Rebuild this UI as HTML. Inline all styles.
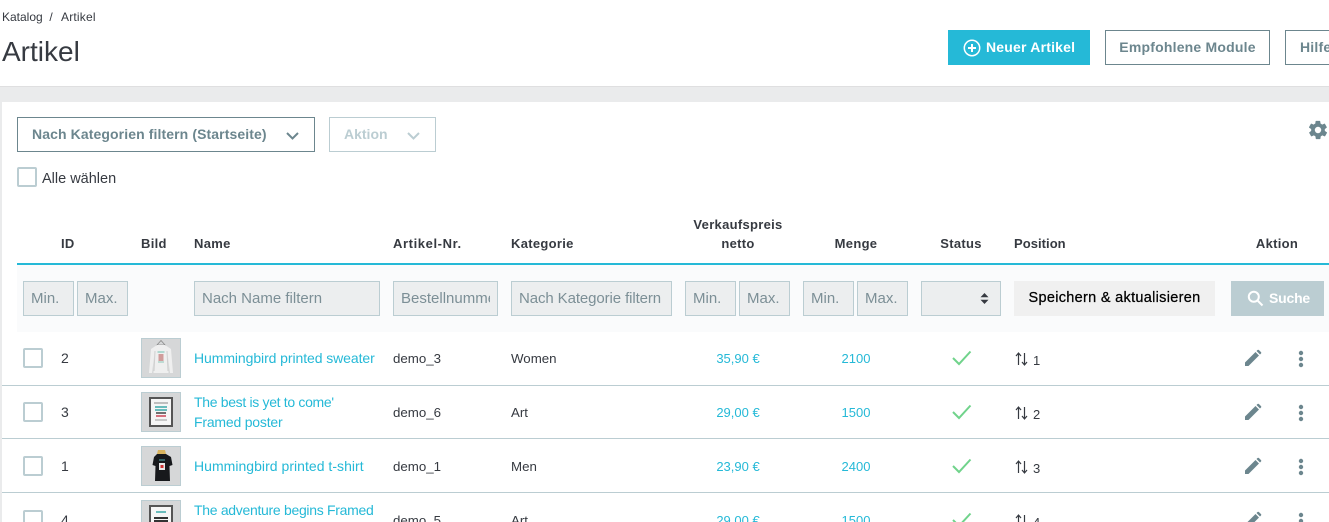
<!DOCTYPE html>
<html lang="de"><head><meta charset="utf-8"><title>Artikel</title>
<style>
*{box-sizing:border-box;margin:0;padding:0}
html,body{width:1329px;height:522px;overflow:hidden;background:#fff;font-family:"Liberation Sans",sans-serif;color:#363a41}
#p{position:relative;width:1329px;height:522px;overflow:hidden;background:#fff}
.a{position:absolute;white-space:nowrap}
.t{font-size:14px;line-height:20px;height:20px}
.d{font-size:13.3px;line-height:22px}
.n{font-size:13px;line-height:21px}
.h{font-size:13px;font-weight:bold;line-height:18px;height:18px;letter-spacing:.3px;color:#363a41}
.c{text-align:center;transform:translateX(-50%)}
.l{color:#25b9d7}
.in{height:35px;top:281px;background:#eceeef;border:1px solid #bbcdd2;font:15px/33px "Liberation Sans",sans-serif;color:#7c8f96;padding:0 7px;overflow:hidden}
.in span{display:block;overflow:hidden}
.cb{width:20px;height:20px;left:23px;border:2px solid #bbcdd2;border-radius:2px;background:#fff}
.sep{left:2px;width:1327px;height:1px;background:#bbcdd2}
.th{left:141px;width:40px;height:40px;background:#d6d7d8;border:1px solid #bbcdd2;overflow:hidden}
.th svg{filter:blur(.35px)}
.btn{top:30px;height:35px;font-size:14px;font-weight:bold;line-height:33px;border:1px solid #6c868e;color:#6c868e;letter-spacing:.2px}
</style></head><body><div id="p">

<div class="a" style="left:2px;top:9px;font-size:12px;line-height:16px">Katalog&nbsp;&nbsp;/</div>
<div class="a" style="left:61px;top:9px;font-size:12px;line-height:16px;letter-spacing:.2px">Artikel</div>
<h1 class="a" style="left:2px;top:36px;font-size:28px;line-height:32px;font-weight:normal">Artikel</h1>

<div class="a btn" style="left:948px;width:142px;background:#25b9d7;border-color:#25b9d7;color:#fff;padding-left:37px">Neuer Artikel</div>
<svg class="a" style="left:963px;top:39px" width="18" height="18" viewBox="0 0 18 18" fill="none" stroke="#fff"><circle cx="9" cy="9" r="7.7" stroke-width="1.5"/><path d="M9 5v8M5 9h8" stroke-width="2"/></svg>
<div class="a btn" style="left:1105px;width:165px;text-align:center">Empfohlene Module</div>
<div class="a btn" style="left:1285px;width:60px;padding-left:14px">Hilfe</div>

<div class="a" style="left:0;top:86px;width:1329px;height:16px;background:#eaebec;border-top:1px solid #dfdfe0"></div>
<div class="a" style="left:0;top:102px;width:2px;height:420px;background:#eaebec"></div>

<div class="a" style="left:17px;top:117px;width:298px;height:35px;border:1px solid #6c868e;font-size:14px;font-weight:bold;line-height:33px;color:#6c868e;padding-left:14px;letter-spacing:.1px">Nach Kategorien filtern (Startseite)</div>
<svg class="a" style="left:285px;top:131px" width="15" height="10" viewBox="0 0 15 10" fill="none" stroke="#6c868e" stroke-width="2"><path d="M2 2l5.500 5.500L13 2"/></svg>
<div class="a" style="left:329px;top:117px;width:107px;height:35px;border:1px solid #bbcdd2;font-size:14px;font-weight:bold;line-height:33px;color:#bbcdd2;padding-left:14px">Aktion</div>
<svg class="a" style="left:406px;top:131px" width="15" height="10" viewBox="0 0 15 10" fill="none" stroke="#bbcdd2" stroke-width="2"><path d="M2 2l5.500 5.500L13 2"/></svg>
<svg class="a" style="left:1307px;top:119px" width="22" height="22" viewBox="0 0 24 24" fill="#6c868e"><path d="M19.4 13a7.600 7.600 0 0 0 0-2l2.100-1.600a.5.500 0 0 0 .1-.6l-2-3.500a.5.500 0 0 0-.6-.2l-2.500 1a7.300 7.300 0 0 0-1.700-1l-.4-2.700a.5.500 0 0 0-.5-.4h-4a.5.500 0 0 0-.5.400l-.4 2.700a7.300 7.300 0 0 0-1.700 1l-2.500-1a.5.500 0 0 0-.6.200l-2 3.500a.5.500 0 0 0 .1.600L4.600 11a7.600 7.600 0 0 0 0 2l-2.100 1.600a.5.500 0 0 0-.1.600l2 3.500c.1.200.4.300.6.200l2.500-1c.5.400 1.100.8 1.700 1l.4 2.700c0 .2.200.4.500.4h4c.3 0 .5-.2.500-.4l.4-2.700c.6-.2 1.200-.6 1.700-1l2.500 1c.2.100.5 0 .6-.2l2-3.500a.5.500 0 0 0-.1-.6zM12 15.500a3.500 3.500 0 1 1 0-7 3.500 3.500 0 0 1 0 7z"/></svg>

<div class="a cb" style="left:17px;top:167px"></div>
<div class="a t" style="left:42px;top:169px;font-size:14.5px">Alle wählen</div>

<div class="a h" style="left:61px;top:235px">ID</div>
<div class="a h" style="left:141px;top:235px">Bild</div>
<div class="a h" style="left:194px;top:235px">Name</div>
<div class="a h" style="left:393px;top:235px;letter-spacing:.6px">Artikel-Nr.</div>
<div class="a h" style="left:511px;top:235px">Kategorie</div>
<div class="a h c" style="left:738px;top:216px">Verkaufspreis</div>
<div class="a h c" style="left:738px;top:235px">netto</div>
<div class="a h c" style="left:856px;top:235px">Menge</div>
<div class="a h c" style="left:961px;top:235px">Status</div>
<div class="a h" style="left:1014px;top:235px;letter-spacing:.05px">Position</div>
<div class="a h c" style="left:1277px;top:235px">Aktion</div>

<div class="a" style="left:17px;top:263px;width:1312px;height:2px;background:#25b9d7"></div>
<div class="a" style="left:17px;top:265px;width:1312px;height:67px;background:#fafbfc"></div>

<div class="a in" style="left:23px;width:51px">Min.</div>
<div class="a in" style="left:77px;width:51px">Max.</div>
<div class="a in" style="left:194px;width:186px">Nach Name filtern</div>
<div class="a in" style="left:393px;width:105px"><span>Bestellnummer</span></div>
<div class="a in" style="left:511px;width:161px;letter-spacing:-.1px">Nach Kategorie filtern</div>
<div class="a in" style="left:685px;width:51px">Min.</div>
<div class="a in" style="left:739px;width:51px">Max.</div>
<div class="a in" style="left:803px;width:51px">Min.</div>
<div class="a in" style="left:857px;width:51px">Max.</div>
<div class="a in" style="left:921px;width:80px"></div>
<svg class="a" style="left:979px;top:292px" width="11" height="13" viewBox="0 0 11 13" fill="#363a41"><path d="M1.500 5.200L5.500 1l4 4.200zM1.500 7.800l4 4.200 4-4.200z"/></svg>
<div class="a" style="left:1014px;top:281px;width:201px;height:35px;background:#f0f0f0;color:#000;font-size:14.500px;line-height:35px;text-align:center;letter-spacing:.3px;-webkit-text-stroke:.25px #000">Speichern &amp; aktualisieren</div>
<div class="a" style="left:1231px;top:281px;width:93px;height:35px;background:#bbcdd2;color:#fff;font-size:14px;font-weight:bold;line-height:35px;padding-left:38px;letter-spacing:-.2px">Suche</div>
<svg class="a" style="left:1247px;top:290px" width="17" height="17" viewBox="0 0 17 17" fill="none" stroke="#fff" stroke-width="2"><circle cx="6.800" cy="6.800" r="5"/><path d="M10.500 10.500l5 5"/></svg>

<div class="a sep" style="top:385px"></div>
<div class="a sep" style="top:438px"></div>
<div class="a sep" style="top:492px"></div>

<div class="a cb" style="top:348px"></div>
<div class="a cb" style="top:402px"></div>
<div class="a cb" style="top:456px"></div>
<div class="a cb" style="top:510px"></div>

<div class="a t" style="left:61px;top:348px">2</div>
<div class="a t" style="left:61px;top:402px">3</div>
<div class="a t" style="left:61px;top:456px">1</div>
<div class="a t" style="left:61px;top:510px">4</div>

<div class="a th" style="top:338px"><svg width="38" height="38" viewBox="0 0 38 38"><path d="M19 1.500l-4 4.500h8z" fill="none" stroke="#8a8a8a" stroke-width=".8"/><path d="M15 6h8l3 2 3 2 2 24h-3l-2-16 .5 16h-15l.5-16-2 16H7L9 10l3-2z" fill="#efefef"/><path d="M13 12l-1 20M25 12l1 20" stroke="#cfcfcf"/><rect x="16.500" y="15" width="5" height="7" fill="#c5807f" opacity=".75"/><path d="M15.500 13h7" stroke="#6fc0b0"/><path d="M16 23h6" stroke="#8fc7b8"/></svg></div>
<div class="a th" style="top:392px"><svg width="38" height="38" viewBox="0 0 38 38"><rect x="7" y="4" width="24" height="30" fill="#555"/><rect x="9" y="6" width="20" height="26" fill="#f6f6f6"/><path d="M12 10h14" stroke="#888"/><path d="M13 14h12M13 17h12" stroke="#3ba9a9" stroke-width="1.500"/><path d="M14 20h10" stroke="#444" stroke-width="1.500"/><path d="M14 23h10" stroke="#cc4455" stroke-width="1.500"/><path d="M13 27h12" stroke="#999"/></svg></div>
<div class="a th" style="top:446px"><svg width="38" height="38" viewBox="0 0 38 38"><path d="M16 3h7l1 4h-9z" fill="#d9b45f"/><path d="M15 7h9l5 3 1.500 8-3 1 .5 15H13l.5-15-3-1L12 10z" fill="#17191c"/><rect x="17" y="16" width="6" height="7" fill="#e8e8e8"/><rect x="18.500" y="18" width="3" height="3" fill="#c33"/><path d="M17 13h6" stroke="#5aa"/></svg></div>
<div class="a th" style="top:500px"><svg width="38" height="38" viewBox="0 0 38 38"><rect x="7" y="4" width="24" height="30" fill="#555"/><rect x="9" y="6" width="20" height="26" fill="#f6f6f6"/><path d="M14 11h10" stroke="#3ba9a9" stroke-width="1.500"/><path d="M12 17h14M12 20h14" stroke="#333" stroke-width="2"/></svg></div>

<div class="a t l" style="left:194px;top:348px;letter-spacing:-.08px">Hummingbird printed sweater</div>
<div class="a t l" style="left:194px;top:392px;letter-spacing:-.32px">The best is yet to come'</div>
<div class="a t l" style="left:194px;top:412px;letter-spacing:-.2px">Framed poster</div>
<div class="a t l" style="left:194px;top:456px;letter-spacing:.03px">Hummingbird printed t-shirt</div>
<div class="a t l" style="left:194px;top:500px;letter-spacing:-.3px">The adventure begins Framed</div>

<div class="a t d" style="left:393px;top:348px">demo_3</div>
<div class="a t d" style="left:393px;top:402px">demo_6</div>
<div class="a t d" style="left:393px;top:456px">demo_1</div>
<div class="a t d" style="left:393px;top:510px">demo_5</div>

<div class="a t d" style="left:511px;top:348px">Women</div>
<div class="a t d" style="left:511px;top:402px">Art</div>
<div class="a t d" style="left:511px;top:456px">Men</div>
<div class="a t d" style="left:511px;top:510px">Art</div>

<div class="a t l c n" style="left:738px;top:348px">35,90 €</div>
<div class="a t l c n" style="left:738px;top:402px">29,00 €</div>
<div class="a t l c n" style="left:738px;top:456px">23,90 €</div>
<div class="a t l c n" style="left:738px;top:510px">29,00 €</div>

<div class="a t l c n" style="left:856px;top:348px">2100</div>
<div class="a t l c n" style="left:856px;top:402px">1500</div>
<div class="a t l c n" style="left:856px;top:456px">2400</div>
<div class="a t l c n" style="left:856px;top:510px">1500</div>

<svg class="a" style="left:952px;top:350px" width="20" height="16" viewBox="0 0 20 16" fill="none" stroke="#70d38b" stroke-width="2"><path d="M1 8l6 6L18.500 1.500"/></svg>
<svg class="a" style="left:952px;top:404px" width="20" height="16" viewBox="0 0 20 16" fill="none" stroke="#70d38b" stroke-width="2"><path d="M1 8l6 6L18.500 1.500"/></svg>
<svg class="a" style="left:952px;top:458px" width="20" height="16" viewBox="0 0 20 16" fill="none" stroke="#70d38b" stroke-width="2"><path d="M1 8l6 6L18.500 1.500"/></svg>
<svg class="a" style="left:952px;top:512px" width="20" height="16" viewBox="0 0 20 16" fill="none" stroke="#70d38b" stroke-width="2"><path d="M1 8l6 6L18.500 1.500"/></svg>

<svg class="a" style="left:1015px;top:352px" width="13" height="14" viewBox="0 0 13 14" fill="none" stroke="#363a41" stroke-width="1.200"><path d="M3.500 13V1.500M1 4l2.500-3L6 4M9.500 1v11.500M7 10l2.500 3L12 10"/></svg>
<svg class="a" style="left:1015px;top:406px" width="13" height="14" viewBox="0 0 13 14" fill="none" stroke="#363a41" stroke-width="1.200"><path d="M3.500 13V1.500M1 4l2.500-3L6 4M9.500 1v11.500M7 10l2.500 3L12 10"/></svg>
<svg class="a" style="left:1015px;top:460px" width="13" height="14" viewBox="0 0 13 14" fill="none" stroke="#363a41" stroke-width="1.200"><path d="M3.500 13V1.500M1 4l2.500-3L6 4M9.500 1v11.500M7 10l2.500 3L12 10"/></svg>
<svg class="a" style="left:1015px;top:514px" width="13" height="14" viewBox="0 0 13 14" fill="none" stroke="#363a41" stroke-width="1.200"><path d="M3.500 13V1.500M1 4l2.500-3L6 4M9.500 1v11.500M7 10l2.500 3L12 10"/></svg>

<div class="a t" style="left:1033px;top:351px;font-size:13px">1</div>
<div class="a t" style="left:1033px;top:405px;font-size:13px">2</div>
<div class="a t" style="left:1033px;top:459px;font-size:13px">3</div>
<div class="a t" style="left:1033px;top:513px;font-size:13px">4</div>

<svg class="a" style="left:1244px;top:349px" width="18" height="18" viewBox="0 0 18 18" fill="#6c868e"><path d="M1 17v-3.500L11.500 3 15 6.500 4.500 17zM12.500 2l1-1c.4-.4 1-.4 1.400 0l2.100 2.100c.4.4.4 1 0 1.400l-1 1z"/></svg>
<svg class="a" style="left:1244px;top:403px" width="18" height="18" viewBox="0 0 18 18" fill="#6c868e"><path d="M1 17v-3.500L11.500 3 15 6.500 4.500 17zM12.500 2l1-1c.4-.4 1-.4 1.400 0l2.100 2.100c.4.4.4 1 0 1.400l-1 1z"/></svg>
<svg class="a" style="left:1244px;top:457px" width="18" height="18" viewBox="0 0 18 18" fill="#6c868e"><path d="M1 17v-3.500L11.500 3 15 6.500 4.500 17zM12.500 2l1-1c.4-.4 1-.4 1.400 0l2.100 2.100c.4.4.4 1 0 1.400l-1 1z"/></svg>
<svg class="a" style="left:1244px;top:511px" width="18" height="18" viewBox="0 0 18 18" fill="#6c868e"><path d="M1 17v-3.500L11.500 3 15 6.500 4.500 17zM12.500 2l1-1c.4-.4 1-.4 1.400 0l2.100 2.100c.4.4.4 1 0 1.400l-1 1z"/></svg>

<svg class="a" style="left:1297.500px;top:350px" width="6" height="18" viewBox="0 0 6 18" fill="#6c868e"><circle cx="3" cy="3" r="2.200"/><circle cx="3" cy="9" r="2.200"/><circle cx="3" cy="15" r="2.200"/></svg>
<svg class="a" style="left:1297.500px;top:404px" width="6" height="18" viewBox="0 0 6 18" fill="#6c868e"><circle cx="3" cy="3" r="2.200"/><circle cx="3" cy="9" r="2.200"/><circle cx="3" cy="15" r="2.200"/></svg>
<svg class="a" style="left:1297.500px;top:458px" width="6" height="18" viewBox="0 0 6 18" fill="#6c868e"><circle cx="3" cy="3" r="2.200"/><circle cx="3" cy="9" r="2.200"/><circle cx="3" cy="15" r="2.200"/></svg>
<svg class="a" style="left:1297.500px;top:512px" width="6" height="18" viewBox="0 0 6 18" fill="#6c868e"><circle cx="3" cy="3" r="2.200"/><circle cx="3" cy="9" r="2.200"/><circle cx="3" cy="15" r="2.200"/></svg>

</div></body></html>
